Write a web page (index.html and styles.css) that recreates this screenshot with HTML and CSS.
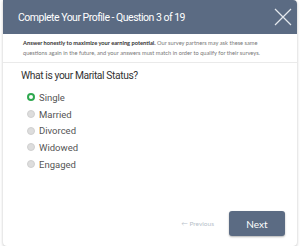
FILE: index.html
```html
<!DOCTYPE html>
<html>
  <head>
    <title>Complete Your Profile</title>
    <link rel="stylesheet" href="styles.css">
  </head>
  <body>
    <div class="modal">
      <div class="modal-header">
        <span class="modal-title">Complete Your Profile - Question 3 of 19</span>
        <svg class="close" width="18" height="18" viewBox="0 0 18 18">
          <path d="M1 1 L17 17 M17 1 L1 17" stroke="#e4e8ee" stroke-width="1.2" fill="none" />
        </svg>
      </div>
      <div class="notice">
        <span><b>Answer honestly to maximize your earning potential.</b> Our survey partners may ask these same</span><br>
        <span>questions again in the future, and your answers must match in order to qualify for their surveys.</span>
      </div>
      <div class="question">
        <h3>What is your Marital Status?</h3>
        <label class="option"><span class="radio checked"></span>Single</label>
        <label class="option"><span class="radio"></span>Married</label>
        <label class="option"><span class="radio"></span>Divorced</label>
        <label class="option"><span class="radio"></span>Widowed</label>
        <label class="option"><span class="radio"></span>Engaged</label>
      </div>
      <div class="modal-footer">
        <span class="prev">&larr; Previous</span>
        <button class="next">Next</button>
      </div>
    </div>
  </body>
</html>
```

FILE: styles.css
```css
body {
  margin: 0;
  background: #fff;
  font-family: Roboto, "Liberation Sans", sans-serif;
}
.modal {
  margin: 0 3px 0 3px;
  height: 246px;
  border-radius: 0 4px 4px 4px;
  background: #fff;
  box-shadow: 0 1px 3px rgba(0, 0, 0, 0.25);
  display: flex;
  flex-direction: column;
}
.modal-header {
  height: 34px;
  background: #5b6b83;
  border-radius: 0 4px 0 0;
  display: flex;
  align-items: center;
  justify-content: space-between;
  padding: 0 5px 0 15px;
}
.modal-title {
  color: #fff;
  font-size: 10.5px;
  letter-spacing: -0.5px;
}
.notice {
  font-family: Lato, "Open Sans", sans-serif;
  font-size: 5.7px;
  line-height: 9.5px;
  color: #777;
  padding: 4px 16px 5px 20px;
  border-bottom: 1px solid #eaeaea;
  white-space: nowrap;
}
.notice b {
  color: #333;
}
.question {
  padding: 6px 16px 0 16px;
  flex: 1;
}
.question h3 {
  margin: 0 0 7px 2px;
  font-size: 10.3px;
  letter-spacing: -0.4px;
  font-weight: normal;
  color: #333;
}
.option {
  display: flex;
  align-items: center;
  height: 16.7px;
  font-size: 9.5px;
  color: #555;
  padding-left: 8px;
}
.radio {
  width: 6px;
  height: 6px;
  border-radius: 50%;
  background: #ddd;
  border: 1px solid #d0d0d0;
  margin-right: 4px;
}
.radio.checked {
  background: #fff;
  border: 2px solid #2fa84f;
  width: 4px;
  height: 4px;
}
.modal-footer {
  display: flex;
  align-items: center;
  justify-content: flex-end;
  padding: 0 12px 10px 0;
}
.prev {
  font-family: Lato, sans-serif;
  font-size: 6.5px;
  color: #b8bfca;
  margin-right: 15px;
}
.next {
  width: 56px;
  height: 25px;
  background: #5b6b83;
  color: #fff;
  border: none;
  border-radius: 3px;
  font-family: Lato, sans-serif;
  font-size: 10px;
  box-shadow: 0 1px 2px rgba(0, 0, 0, 0.3);
}
```
